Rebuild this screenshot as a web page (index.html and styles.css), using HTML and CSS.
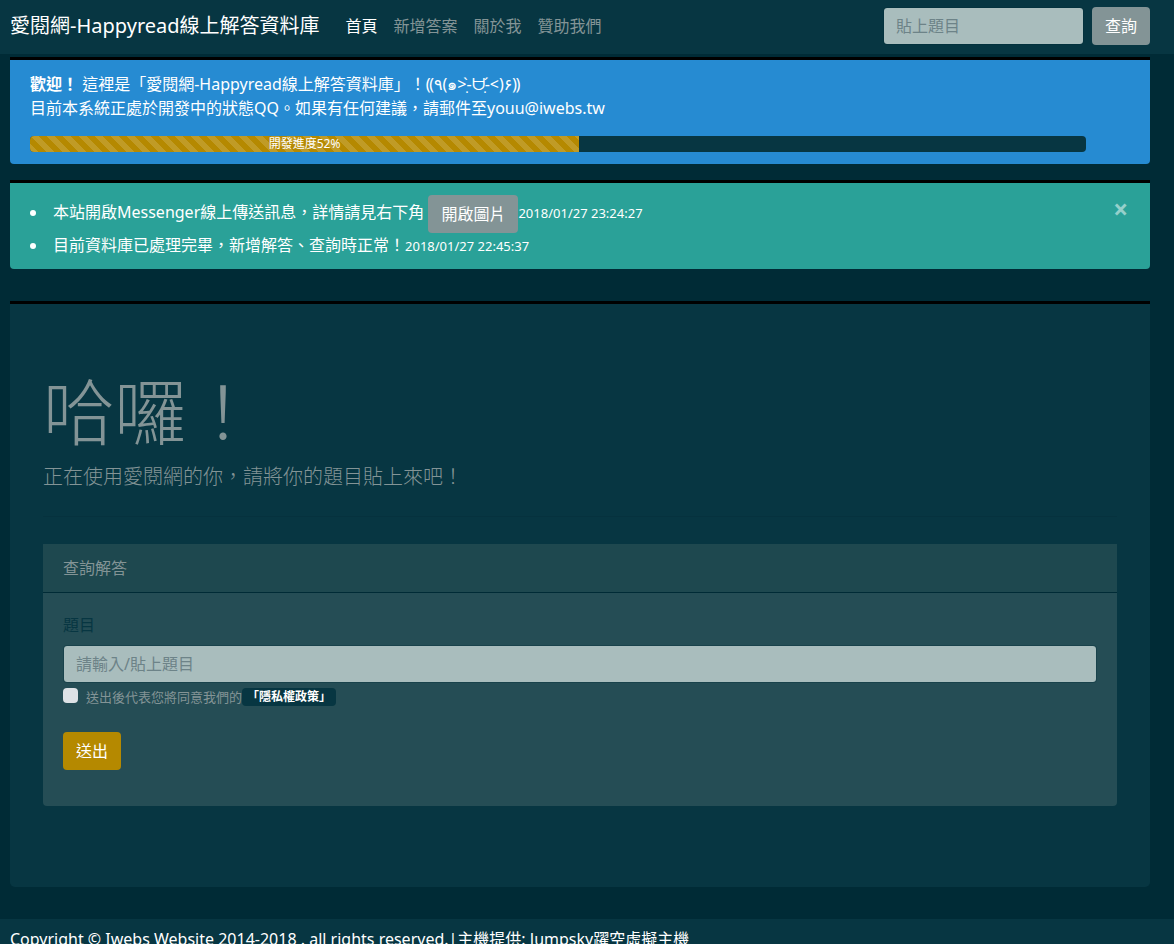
FILE: index.html
```html
<!DOCTYPE html>
<html lang="zh-Hant">
<head>
<meta charset="utf-8">
<meta name="viewport" content="width=device-width, initial-scale=1">
<title>愛閱網-Happyread線上解答資料庫</title>
<link rel="stylesheet" href="styles.css">
</head>
<body>
<nav class="navbar">
  <a class="brand" href="#">愛閱網-Happyread線上解答資料庫</a>
  <ul class="nav-links">
    <li><a class="nav-link active" href="#">首頁</a></li>
    <li><a class="nav-link" href="#">新增答案</a></li>
    <li><a class="nav-link" href="#">關於我</a></li>
    <li><a class="nav-link" href="#">贊助我們</a></li>
  </ul>
  <form class="nav-search">
    <input class="field" type="search" placeholder="貼上題目" aria-label="貼上題目">
    <button class="btn btn-secondary" type="submit">查詢</button>
  </form>
</nav>
<main class="content">
  <div class="alert alert-info" role="alert">
    <p class="welcome"><strong>歡迎！</strong> 這裡是「愛閱網-Happyread線上解答資料庫」！⸨٩(๑&gt;-&#x323;&#x300;ᗨ-&#x323;&#x301;&lt;)۶⸩<br>目前本系統正處於開發中的狀態QQ。如果有任何建議，請郵件至youu@iwebs.tw</p>
    <div class="progress">
      <div class="progress-bar" role="progressbar" aria-valuenow="52" aria-valuemin="0" aria-valuemax="100" style="width: 52%">開發進度52%</div>
    </div>
  </div>
  <div class="alert alert-success" role="alert">
    <ul class="news">
      <li>本站開啟Messenger線上傳送訊息，詳情請見右下角 <button class="btn btn-secondary" type="button">開啟圖片</button><small>2018/01/27 23:24:27</small></li>
      <li>目前資料庫已處理完畢，新增解答、查詢時正常！<small>2018/01/27 22:45:37</small></li>
    </ul>
    <button class="close" type="button" aria-label="Close">×</button>
  </div>
  <section class="jumbotron">
    <h1 class="title">哈囉！</h1>
    <p class="lead">正在使用愛閱網的你，請將你的題目貼上來吧！</p>
    <hr class="divider">
    <div class="card">
      <div class="card-header">查詢解答</div>
      <form class="card-body">
        <label class="field-label" for="question">題目</label>
        <input class="field" id="question" type="text" placeholder="請輸入/貼上題目">
        <div class="consent">
          <input class="check" id="agree" type="checkbox">
          <label for="agree">送出後代表您將同意我們的</label><a class="badge" href="#">「隱私權政策」</a>
        </div>
        <button class="btn btn-warning" type="submit">送出</button>
      </form>
    </div>
  </section>
</main>
<footer class="footer">Copyright © Iwebs Website 2014-2018 . all rights reserved.|主機提供: Jumpsky躍空虛擬主機</footer>
</body>
</html>
```
FILE: styles.css
```css
* {
  box-sizing: border-box;
}

body {
  margin: 0;
  background: #002b36;
  color: #839496;
  font-family: "Noto Sans", "Noto Sans CJK TC", "DejaVu Sans", sans-serif;
  font-size: 16px;
  line-height: 24px;
}

a {
  text-decoration: none;
}

.navbar {
  display: flex;
  align-items: center;
  padding: 7px 24px 9px 10px;
  background: #073642;
}

.brand {
  margin-right: 18px;
  color: #fff;
  font-size: 20px;
  line-height: 30px;
}

.nav-links {
  display: flex;
  margin: 0;
  padding: 0;
  list-style: none;
}

.nav-link {
  display: block;
  padding: 7px 8px;
  color: #839496;
}

.nav-link.active {
  color: #fff;
}

.nav-search {
  display: flex;
  gap: 8px;
  margin-left: auto;
}

.nav-search .field {
  width: 201px;
}

.field {
  display: block;
  width: 100%;
  height: 38px;
  padding: 6px 12px;
  border: 1px solid rgba(0, 43, 54, 0.3);
  border-radius: 4px;
  background: #a9bdbd;
  background-clip: padding-box;
  color: #073642;
  font: inherit;
}

.field::placeholder {
  color: #6d8388;
  opacity: 1;
}

.btn {
  display: inline-block;
  padding: 7px 13px;
  border: 0;
  border-radius: 4px;
  color: #fff;
  font: inherit;
  white-space: nowrap;
  vertical-align: middle;
}

.btn-secondary {
  background: #839496;
}

.btn-warning {
  background: #b58900;
}

.content {
  padding: 3px 24px 32px 10px;
}

.alert {
  position: relative;
  margin-bottom: 16px;
  padding: 12px 64px 12px 20px;
  border-top: 3px solid #000;
  border-radius: 0 0 4px 4px;
  color: #fff;
}

.alert-info {
  background: #268bd2;
}

.alert-success {
  margin-bottom: 32px;
  background: #2aa198;
}

.welcome {
  margin: 0 0 16px;
}

.progress {
  overflow: hidden;
  border-radius: 4px;
  background: #073642;
}

.progress-bar {
  background-color: #b58900;
  background-image: linear-gradient(45deg, rgba(255, 255, 255, 0.15) 25%, transparent 25%, transparent 50%, rgba(255, 255, 255, 0.15) 50%, rgba(255, 255, 255, 0.15) 75%, transparent 75%, transparent);
  background-size: 16px 16px;
  font-size: 12px;
  line-height: 16px;
  text-align: center;
}

.news {
  margin: 0;
  padding: 0;
  list-style-position: inside;
}

small {
  font-size: 13px;
  line-height: 16px;
}

.close {
  position: absolute;
  top: 0;
  right: 0;
  padding: 12px 22px;
  border: 0;
  background: none;
  color: #fff;
  font: 700 26px/28px "Open Sans", sans-serif;
  opacity: 0.5;
}

.jumbotron {
  padding: 64px 33px 81px;
  border-top: 3px solid #000;
  border-radius: 0 0 5px 5px;
  background: #073642;
}

.title {
  margin: 0 0 8px;
  font-size: 72px;
  font-weight: 300;
  line-height: 86px;
}

.lead {
  margin: 0 0 24px;
  font-size: 20px;
  font-weight: 300;
  line-height: 30px;
}

.divider {
  margin: 0 0 27px;
  border: 0;
  border-top: 1px solid #06323e;
}

.card {
  overflow: hidden;
  border-radius: 1px 1px 4px 4px;
  background: #254d55;
}

.card-header {
  padding: 12px 20px;
  border-bottom: 1px solid #002b36;
  background: #1e484f;
}

.card-body {
  padding: 20px 20px 36px;
}

.field-label {
  display: block;
  margin-bottom: 8px;
  color: #073642;
}

.consent {
  display: flex;
  align-items: center;
  margin: 4px 0 25px;
  font-size: 13px;
  line-height: 20px;
}

.check {
  width: 15px;
  height: 15px;
  margin: 0 8px 4px 0;
  border-radius: 4px;
  background: #dee2e6;
  appearance: none;
}

.badge {
  padding: 1px 5px;
  border-radius: 4px;
  background: #073642;
  color: #fff;
  font-size: 12px;
  font-weight: 700;
  line-height: 16px;
}

.footer {
  padding: 8px 10px;
  background: #073642;
  color: #fff;
}
```
